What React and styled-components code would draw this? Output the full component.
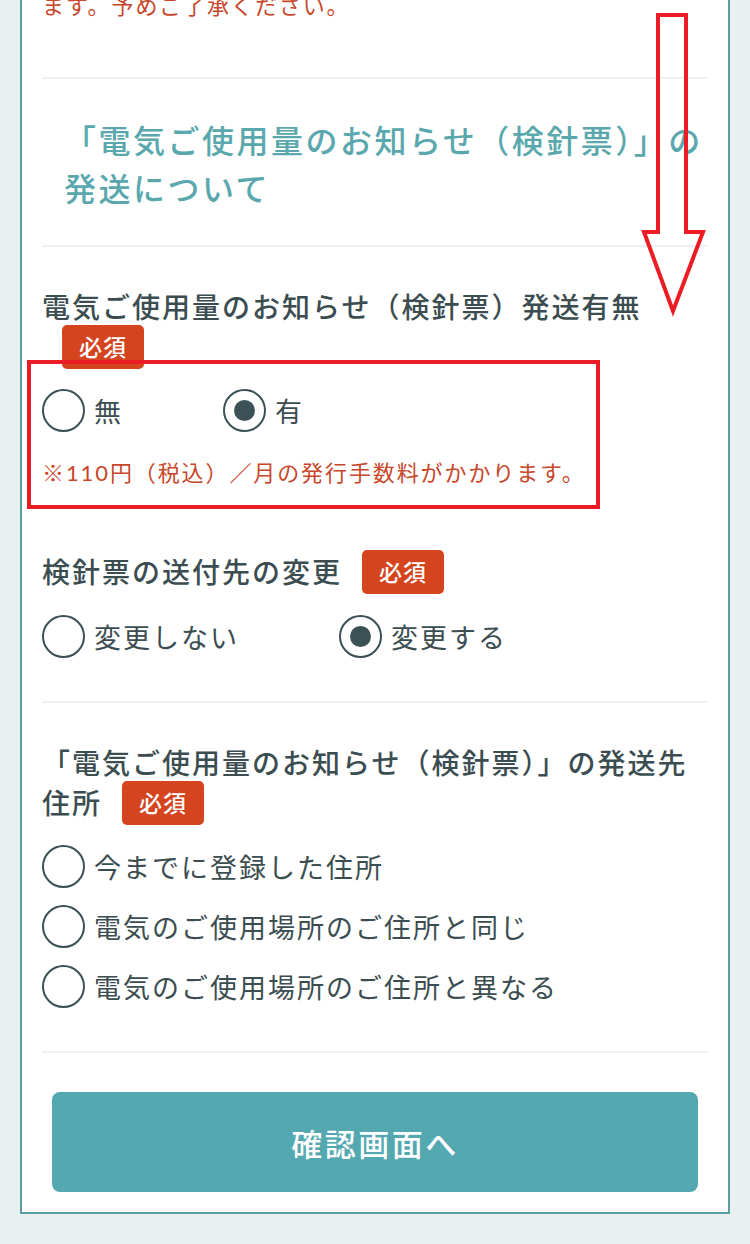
import React, { useState } from 'react';
import styled, { createGlobalStyle } from 'styled-components';

const GlobalStyle = createGlobalStyle`
    html, body {
        margin: 0;
        padding: 0;
        background: #e9f0f0;
    }
    body {
        font-family: Lato, "Noto Sans CJK JP", sans-serif;
        color: #3b4d50;
    }
`

const Page = styled.div`
    position: relative;
    width: 750px;
    height: 1244px;
    overflow: hidden;
`

const Card = styled.div`
    margin: -12px 20px 0;
    padding: 0 20px 20px;
    background: #fff;
    border: 2px solid #5a9ea3;
    border-top: none;
`

const Notice = styled.p`
    margin: ${p => p.top || 0}px 0 0;
    font-size: 22px;
    line-height: 36px;
    letter-spacing: 1.9px;
    color: #c8472a;
`

const Divider = styled.hr`
    margin: ${p => p.top}px 0 0;
    border: none;
    height: 2px;
    background: #eef1f1;
`

const SectionTitle = styled.h2`
    margin: 0;
    padding: 38px 0 32px 22px;
    font-size: 32px;
    line-height: 48px;
    font-weight: 500;
    letter-spacing: 2.5px;
    color: #5aa8ad;
`

const Label = styled.div`
    margin-top: ${p => p.top}px;
    font-size: 28px;
    line-height: 40px;
    font-weight: 500;
    letter-spacing: 2px;
    color: #3b4d50;
`

const Required = styled.span`
    display: inline-block;
    margin: -2px 0 -2px 20px;
    padding: 0 17px;
    height: 44px;
    line-height: 44px;
    border-radius: 5px;
    background: #d4441f;
    color: #fff;
    font-size: 23px;
    font-weight: 500;
    letter-spacing: 1px;
    vertical-align: top;
`

const Options = styled.div`
    margin-top: ${p => p.top}px;
    display: flex;
    flex-direction: ${p => (p.column ? 'column' : 'row')};
    gap: ${p => (p.column ? 16 : 100)}px;
`

const Option = styled.label`
    display: flex;
    align-items: center;
    gap: 9px;
    height: 44px;
    font-size: 27px;
    letter-spacing: 2px;
    color: #3b4d50;
    cursor: pointer;
`

const Circle = styled.span`
    box-sizing: border-box;
    width: 43px;
    height: 43px;
    flex: none;
    border: 2px solid #3b5155;
    border-radius: 50%;
    display: flex;
    align-items: center;
    justify-content: center;

    &::after {
        content: '';
        width: 21px;
        height: 21px;
        border-radius: 50%;
        background: #3b5155;
        display: ${p => (p.checked ? 'block' : 'none')};
    }
`

const SubmitButton = styled.button`
    display: block;
    width: calc(100% - 20px);
    height: 100px;
    margin: 39px 10px 0;
    border: none;
    border-radius: 8px;
    background: #54a9b1;
    color: #fff;
    font-family: inherit;
    font-size: 31px;
    font-weight: 500;
    letter-spacing: 2.5px;
`

const Highlight = styled.div`
    position: absolute;
    left: 27px;
    top: 360px;
    width: 573px;
    height: 149px;
    box-sizing: border-box;
    border: 4px solid #ec1c24;
    pointer-events: none;
`

const ArrowLayer = styled.svg`
    position: absolute;
    left: 0;
    top: 0;
    pointer-events: none;
`

const RadioGroup = ({ options, value, onChange, column, top }) => (
    <Options column={column} top={top}>
        {options.map(o => (
            <Option key={o} onClick={() => onChange(o)}>
                <Circle checked={value === o} />
                {o}
            </Option>
        ))}
    </Options>
)

const App = () => {
    const [send, setSend] = useState('有');
    const [change, setChange] = useState('変更する');
    const [addr, setAddr] = useState('');

    return (
        <Page>
            <GlobalStyle />
            <Card>
                <Notice>ます。予めご了承ください。</Notice>
                <Divider top={53} />
                <SectionTitle>「電気ご使用量のお知らせ（検針票）」の発送について</SectionTitle>
                <Divider top={0} />

                <Label top={40}>
                    電気ご使用量のお知らせ（検針票）発送有無<Required>必須</Required>
                </Label>
                <RadioGroup top={21} options={['無', '有']} value={send} onChange={setSend} />
                <Notice top={23}>※110円（税込）／月の発行手数料がかかります。</Notice>

                <Label top={61}>
                    検針票の送付先の変更<Required>必須</Required>
                </Label>
                <RadioGroup top={22} options={['変更しない', '変更する']} value={change} onChange={setChange} />
                <Divider top={43} />

                <Label top={40}>
                    「電気ご使用量のお知らせ（検針票）」の発送先住所<Required>必須</Required>
                </Label>
                <RadioGroup
                    column
                    top={21}
                    options={['今までに登録した住所', '電気のご使用場所のご住所と同じ', '電気のご使用場所のご住所と異なる']}
                    value={addr}
                    onChange={setAddr}
                />
                <Divider top={43} />

                <SubmitButton>確認画面へ</SubmitButton>
            </Card>

            <Highlight />
            <ArrowLayer width="750" height="330" viewBox="0 0 750 330">
                <polygon
                    points="658,15 686,15 686,232 703,232 673,311 644,232 658,232"
                    fill="none"
                    stroke="#ec1c24"
                    strokeWidth="4"
                    strokeLinejoin="miter"
                />
            </ArrowLayer>
        </Page>
    );
}

export default App;
